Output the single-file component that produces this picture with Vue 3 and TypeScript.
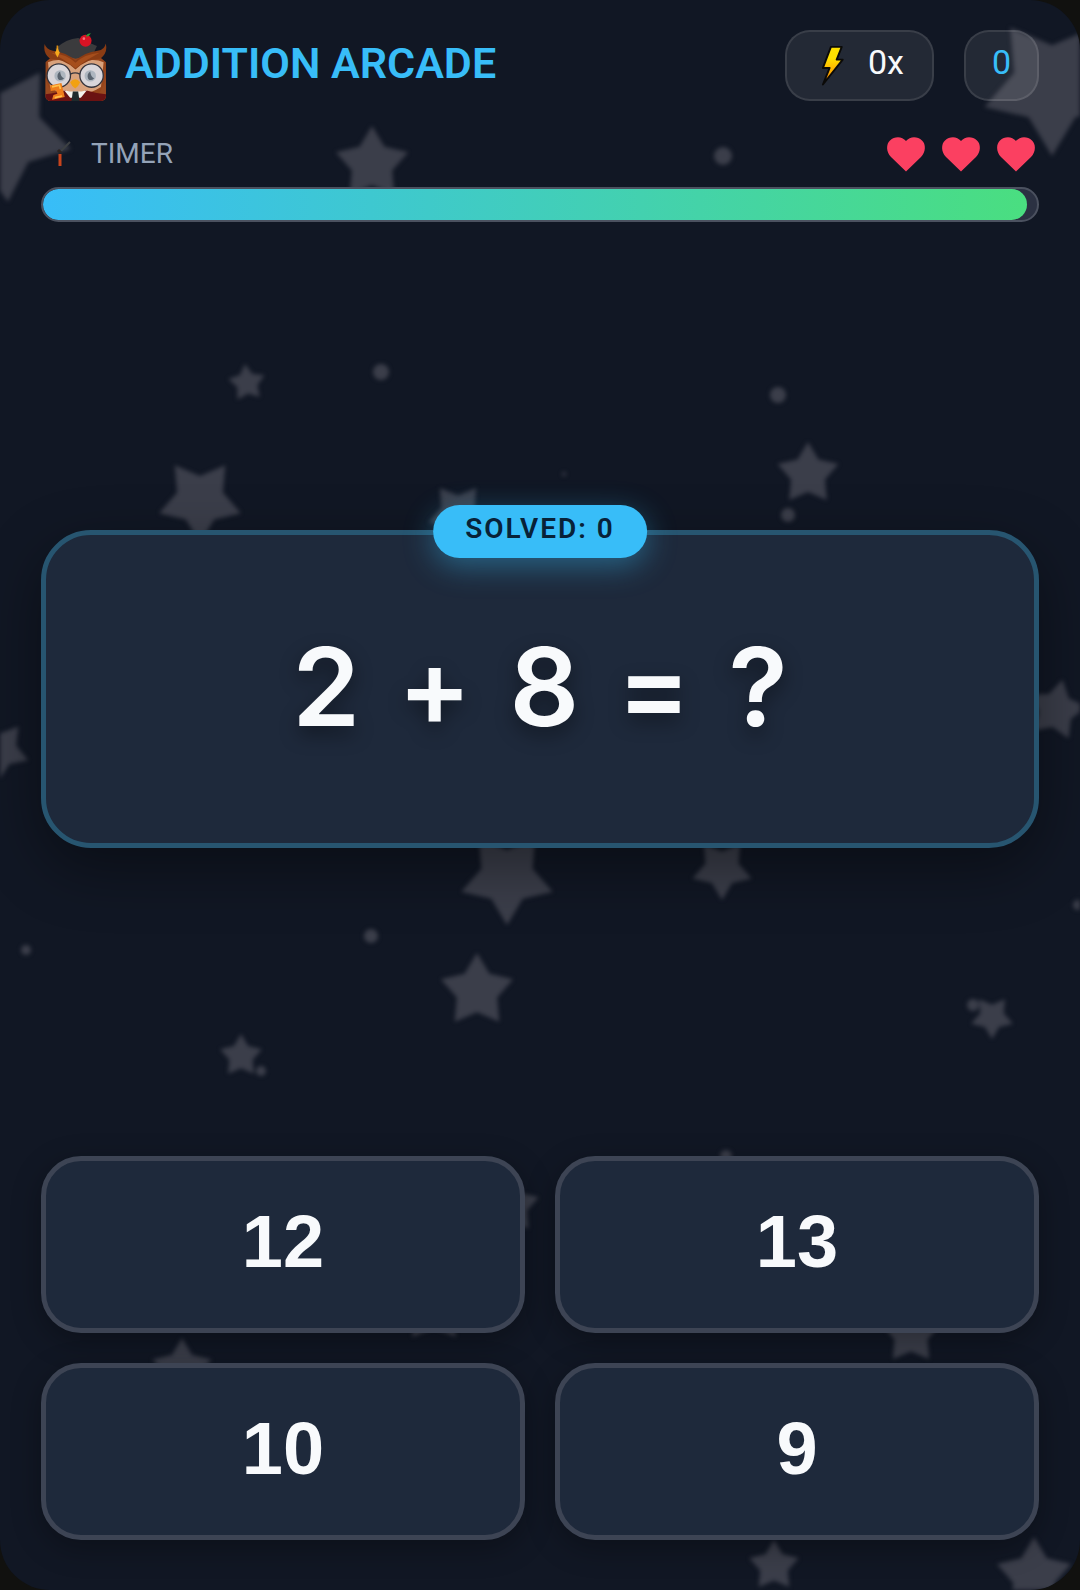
<script setup lang="ts">
import { computed, ref } from 'vue'

interface Star {
  x: number
  y: number
  r: number
  /** direction of the first tip, in degrees clockwise from the right */
  tip: number
}

interface Speck {
  x: number
  y: number
  r: number
}

const UP = -90
const DOWN = 90

const stars: Star[] = [
  { x: 3, y: 132, r: 70, tip: 14 },
  { x: 1052, y: 85, r: 71, tip: DOWN },
  { x: 372, y: 164, r: 38, tip: UP },
  { x: 247, y: 383, r: 19, tip: -96 },
  { x: 200, y: 500, r: 43, tip: DOWN },
  { x: 458, y: 513, r: 31, tip: DOWN },
  { x: 808, y: 474, r: 32, tip: UP },
  { x: 1056, y: 710, r: 31, tip: -78 },
  { x: 0, y: 750, r: 30, tip: 20 },
  { x: 507, y: 877, r: 48, tip: DOWN },
  { x: 722, y: 869, r: 31, tip: DOWN },
  { x: 477, y: 991, r: 38, tip: UP },
  { x: 992, y: 1017, r: 22, tip: DOWN },
  { x: 241, y: 1056, r: 22, tip: UP },
  { x: 512, y: 1206, r: 28, tip: UP },
  { x: 182, y: 1369, r: 31, tip: UP },
  { x: 434, y: 1307, r: 37, tip: UP },
  { x: 911, y: 1334, r: 31, tip: UP },
  { x: 774, y: 1566, r: 26, tip: UP },
  { x: 1034, y: 1576, r: 39, tip: UP },
]

const specks: Speck[] = [
  { x: 723, y: 156, r: 9 },
  { x: 381, y: 372, r: 8 },
  { x: 778, y: 395, r: 8 },
  { x: 788, y: 515, r: 7 },
  { x: 564, y: 474, r: 2 },
  { x: 371, y: 936, r: 7 },
  { x: 26, y: 950, r: 5 },
  { x: 1078, y: 905, r: 5 },
  { x: 973, y: 1005, r: 6 },
  { x: 261, y: 1071, r: 5 },
  { x: 726, y: 1156, r: 6 },
]

function starPoints(s: Star): string {
  return Array.from({ length: 10 }, (_, i) => {
    const radius = i % 2 ? s.r * 0.56 : s.r
    const angle = ((s.tip + i * 36) * Math.PI) / 180
    return `${(s.x + radius * Math.cos(angle)).toFixed(1)},${(s.y + radius * Math.sin(angle)).toFixed(1)}`
  }).join(' ')
}

const left = ref(2)
const right = ref(8)
const terms = computed(() => [left.value, '+', right.value, '=', '?'])
const answers = ref([12, 13, 10, 9])
const lives = ref(3)
const score = ref(0)
const streak = ref(0)
const solved = ref(0)
const timeLeft = ref(99)

function choose(answer: number) {
  if (answer === left.value + right.value) {
    solved.value += 1
    streak.value += 1
    score.value += 10 * streak.value
  } else {
    streak.value = 0
    lives.value = Math.max(0, lives.value - 1)
  }
}
</script>

<template>
  <main class="arcade">
    <svg class="sky" viewBox="0 0 1080 1590" preserveAspectRatio="xMidYMid slice" aria-hidden="true">
      <polygon v-for="(s, i) in stars" :key="`star-${i}`" :points="starPoints(s)" />
      <circle v-for="(d, i) in specks" :key="`speck-${i}`" :cx="d.x" :cy="d.y" :r="d.r" />
    </svg>

    <header class="top">
      <div class="brand">
        <svg class="owl" viewBox="20 6 188 206" aria-hidden="true">
          <defs>
            <clipPath id="owl-body"><rect x="24" y="10" width="181" height="202" rx="16" /></clipPath>
          </defs>
          <g clip-path="url(#owl-body)">
            <path d="M24 96Q60 60 115 76Q170 60 205 96V212H24Z" fill="#96451b" />
            <path d="M32 96Q70 80 114 104Q160 80 198 96L190 170Q150 196 114 190Q70 196 38 170Z" fill="#d9a27c" />
            <path d="M24 140Q34 190 74 212H24ZM205 140Q196 190 156 212H205Z" fill="#9a4a20" />
            <path d="M24 192Q60 188 84 180L112 212H24ZM205 192Q170 188 144 180L116 212H205Z" fill="#6b1212" />
            <path d="M80 180L96 184H132L148 180L130 202H98Z" fill="#f3f1ec" />
            <path d="M106 184H122L126 212H102Z" fill="#1f2a2c" />
          </g>
          <path d="M54 56Q86 26 122 24L178 48L166 74L114 86L62 70Z" fill="#3b3b3d" />
          <path d="M22 42Q26 58 46 62Q86 66 114 92Q142 66 180 62Q202 58 204 40Q212 68 188 86Q150 84 114 118Q78 84 38 86Q16 68 22 42Z" fill="#8a3c14" />
          <path d="M42 68Q88 72 114 98Q140 72 186 68Q150 86 114 114Q78 86 42 68Z" fill="#a64e1c" />
          <path d="M60 46V60" stroke="#d98a12" stroke-width="5" />
          <path d="M60 52L67 68L60 82L53 68Z" fill="#f6a81c" />
          <circle cx="144" cy="32" r="18" fill="#d81324" />
          <circle cx="139" cy="26" r="4" fill="#f4737c" />
          <path d="M146 18Q148 10 160 10Q156 19 146 20Z" fill="#2f9a3a" />
          <circle cx="64" cy="136" r="35" fill="#d9d6da" stroke="#35343c" stroke-width="4" />
          <circle cx="162" cy="136" r="35" fill="#d9d6da" stroke="#35343c" stroke-width="4" />
          <circle cx="68" cy="137" r="17" fill="#aeb6bf" />
          <circle cx="158" cy="137" r="17" fill="#aeb6bf" />
          <path d="M68 124Q56 132 62 146Q70 154 80 144Q70 142 68 124ZM158 124Q146 132 152 146Q160 154 170 144Q160 142 158 124Z" fill="#59636e" />
          <path d="M99 132Q113 124 127 132" fill="none" stroke="#35343c" stroke-width="4" />
          <path d="M98 156Q113 138 128 156Q123 168 113 175Q103 168 98 156Z" fill="#f2a111" />
          <path d="M38 166L72 158L82 200L44 208L48 194L60 190L56 180L40 182Z" fill="#ef7d1b" />
          <path d="M44 170L66 165L69 176M52 202L74 197" fill="none" stroke="#ffc24a" stroke-width="5" />
        </svg>
        <h1 class="title">ADDITION ARCADE</h1>
      </div>
      <div class="stats">
        <div class="pill streak">
          <svg class="bolt" viewBox="-3 -3 72 130" aria-hidden="true">
            <defs>
              <linearGradient id="bolt-fill" x1="0" y1="0" x2="0" y2="1">
                <stop offset="0.3" stop-color="#ffe100" />
                <stop offset="0.9" stop-color="#ff8a00" />
              </linearGradient>
            </defs>
            <path d="M28 2H62L46 42H65L3 120L24 68H3Z" fill="url(#bolt-fill)" stroke="#0b0a08" stroke-width="6" stroke-linejoin="round" />
          </svg>
          <span class="value">{{ streak }}x</span>
        </div>
        <div class="pill"><span class="value score">{{ score }}</span></div>
      </div>
    </header>

    <section class="status">
      <div class="status-row">
        <div class="timer-label">
          <svg class="fuse" viewBox="0 0 30 30" aria-hidden="true">
            <path d="M20 12L29 3" stroke="#3d4043" stroke-width="2" />
            <path d="M17 11L20 14" stroke="#2a2320" stroke-width="3" />
            <path d="M19 15V27" stroke="#c8441c" stroke-width="3" />
          </svg>
          <span id="timer-name">TIMER</span>
        </div>
        <div class="lives" role="img" :aria-label="`${lives} lives`">
          <svg v-for="n in lives" :key="n" class="heart" viewBox="0 0 46 46">
            <path d="M23 40.500L8 26C3 21 3 13 7 9.500C11.500 5 19 5 23 10C27 5 34.500 5 39 9.500C43 13 43 21 38 26Z" />
          </svg>
        </div>
      </div>
      <div class="bar" role="progressbar" aria-labelledby="timer-name" :aria-valuenow="timeLeft" aria-valuemin="0" aria-valuemax="100">
        <div class="fill" :style="{ width: `${timeLeft}%` }"></div>
      </div>
    </section>

    <section class="stage">
      <div class="card">
        <div class="badge">SOLVED: {{ solved }}</div>
        <p class="equation">
          <span v-for="(term, i) in terms" :key="i">{{ term }}</span>
        </p>
      </div>
    </section>

    <section class="answers">
      <button v-for="a in answers" :key="a" type="button" class="answer" @click="choose(a)">{{ a }}</button>
    </section>
  </main>
</template>

<style>
body {
  margin: 0;
  background: #11110f;
}
</style>

<style scoped>
.arcade {
  position: relative;
  box-sizing: border-box;
  display: flex;
  flex-direction: column;
  min-height: 100vh;
  padding: 30px 41px 50px;
  overflow: hidden;
  border-radius: 50px;
  background: #111724;
  color: #f8fafc;
  font-family: Roboto, "Noto Sans", sans-serif;
}

.sky {
  position: absolute;
  inset: 0;
  width: 100%;
  height: 100%;
  fill: #3b3e4a;
  filter: blur(2px);
}

.top,
.status,
.stage,
.answers {
  position: relative;
}

.top {
  display: flex;
  align-items: flex-end;
  justify-content: space-between;
}

.brand {
  display: flex;
  align-items: center;
  gap: 18px;
  padding-left: 3px;
}

.owl {
  width: 63px;
  height: 69px;
}

.title {
  margin: 0;
  padding-bottom: 7px;
  color: #38bdf8;
  font-size: 43px;
  font-weight: 600;
  line-height: 62px;
}

.stats {
  display: flex;
  gap: 30px;
}

.pill {
  box-sizing: border-box;
  display: flex;
  align-items: center;
  justify-content: center;
  gap: 24px;
  height: 71px;
  min-width: 75px;
  padding: 0 26px;
  border: 2px solid rgba(255, 255, 255, 0.1);
  border-radius: 25px;
  background: rgba(255, 255, 255, 0.08);
}

.streak {
  padding: 0 28px 0 34px;
}

.bolt {
  width: 23px;
  height: 42px;
}

.value {
  padding-bottom: 8px;
  font-size: 34px;
  line-height: 40px;
}

.score {
  color: #38bdf8;
}

.status {
  margin-top: 30px;
}

.status-row {
  display: flex;
  align-items: center;
  justify-content: space-between;
}

.timer-label {
  display: flex;
  align-items: center;
  gap: 20px;
  color: #94a3b8;
  font-size: 28px;
  line-height: 46px;
}

.fuse {
  width: 30px;
  height: 30px;
}

.lives {
  display: flex;
  gap: 9px;
}

.heart {
  width: 46px;
  height: 46px;
  fill: #fb4061;
}

.bar {
  box-sizing: border-box;
  height: 35px;
  margin-top: 10px;
  overflow: hidden;
  border: 2px solid #4b515f;
  border-radius: 18px;
  background: #2b3142;
}

.fill {
  height: 100%;
  border-radius: 16px;
  background: linear-gradient(90deg, #38bdf8, #4ade80);
}

.stage {
  display: flex;
  flex: 1;
  align-items: center;
}

.card {
  position: relative;
  box-sizing: border-box;
  flex: 1;
  padding: 81px 20px 86px;
  border: 5px solid #275570;
  border-radius: 50px;
  background: #1e293b;
  box-shadow: 0 20px 60px rgba(0, 0, 0, 0.4);
}

.badge {
  position: absolute;
  top: -30px;
  left: 50%;
  padding: 0 32px 6px;
  border-radius: 27px;
  background: #38bdf8;
  box-shadow: 0 8px 30px rgba(56, 189, 248, 0.4);
  color: #082238;
  font-size: 28px;
  font-weight: 600;
  line-height: 47px;
  letter-spacing: 2px;
  white-space: nowrap;
  transform: translateX(-50%);
}

.equation {
  display: flex;
  justify-content: center;
  gap: 38px;
  margin: 0;
  font-family: Inter, sans-serif;
  font-size: 109px;
  font-weight: 600;
  line-height: 141px;
  text-shadow: 0 8px 20px rgba(0, 0, 0, 0.4);
}

.answers {
  display: grid;
  grid-template-columns: 1fr 1fr;
  gap: 30px;
}

.answer {
  height: 177px;
  padding: 0 0 6px;
  border: 5px solid #3d4454;
  border-radius: 40px;
  background: #1e293b;
  box-shadow: 0 8px 30px rgba(0, 0, 0, 0.3);
  color: #f8fafc;
  font-family: "Liberation Sans", Arial, sans-serif;
  font-size: 74px;
  font-weight: 700;
  cursor: pointer;
}
</style>
